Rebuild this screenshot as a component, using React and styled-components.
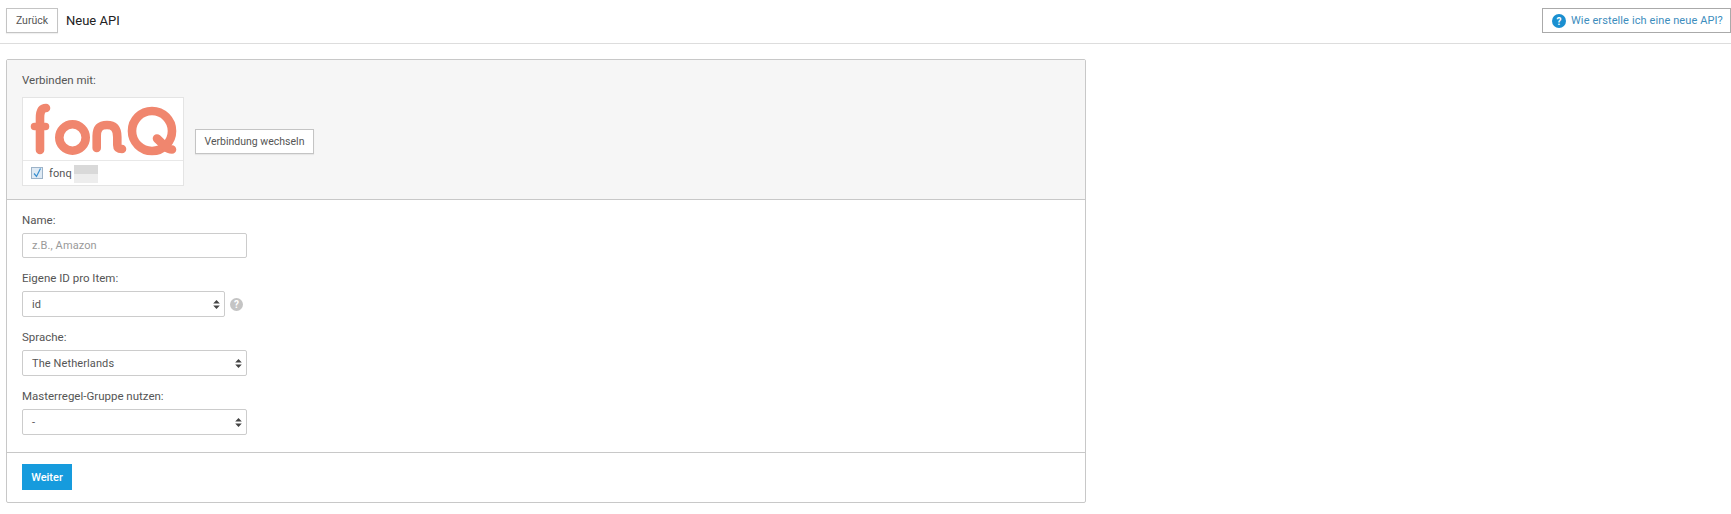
import React from "react";
import styled, { createGlobalStyle } from "styled-components";

const Global = createGlobalStyle`
  html, body { margin: 0; padding: 0; background: #fff; }
  body { font-family: Roboto, "Liberation Sans", sans-serif; font-size: 11px; color: #555; }
`;
const Header = styled.header`
  height: 44px; border-bottom: 1px solid #ddd; padding: 8px 0 0 6px; box-sizing: border-box;
  display: flex; align-items: flex-start; justify-content: space-between;
`;
const HeaderLeft = styled.div`display: flex; align-items: center; gap: 8px;`;
const Title = styled.h1`margin: 0; font-size: 13px; font-weight: 400; color: #222;`;
const Button = styled.button`
  height: 25px; width: ${p => p.$w}px; padding: 0; background: #fff; border: 1px solid #c4c4c4; color: #555;
  font: 400 10.5px Roboto, sans-serif; box-sizing: border-box; box-shadow: 0 1px 1px rgba(0,0,0,.06);
`;
const Help = styled.a`
  height: 25px; width: 189px; border: 1px solid #aaa; box-sizing: border-box; white-space: nowrap;
  display: flex; align-items: center; gap: 5px; padding-left: 9px; color: #3d8dbd; font-size: 11px; letter-spacing: .1px;
`;
const Panel = styled.main`
  width: 1080px; margin: 15px 0 0 6px; border: 1px solid #c8c8c8; border-radius: 2px; box-sizing: border-box;
`;
const Top = styled.section`
  height: 140px; background: #f6f6f6; border-bottom: 1px solid #c8c8c8; padding: 13px 15px 0; box-sizing: border-box;
`;
const Label = styled.label`display: block; font-size: 11.5px; color: #555; line-height: 14px;`;
const ConnectRow = styled.div`display: flex; align-items: center; gap: 11px; margin-top: 10px;`;
const Card = styled.div`width: 162px; height: 89px; background: #fff; border: 1px solid #e4e4e4; box-sizing: border-box;`;
const LogoBox = styled.div`height: 63px; border-bottom: 1px solid #e8e8e8; box-sizing: border-box;`;
const CardFoot = styled.div`display: flex; align-items: center; height: 24px; padding-left: 8px; gap: 6px; font-size: 11px; letter-spacing: .1px;`;
const Check = styled.span`
  width: 12px; height: 12px; border: 1px solid #9db3c8; background: #dfeaf4; display: block; box-sizing: border-box;
`;
const Blur = styled.span`display: block; width: 24px; height: 18px; margin: 2px 0 0 -4px; background: linear-gradient(#d9d9d9 0 50%, #ededed 50%);`;
const Form = styled.section`padding: 13px 15px 0; height: 253px; box-sizing: border-box; border-bottom: 1px solid #c8c8c8;`;
const Field = styled.div`margin-bottom: 13px;`;
const Control = styled.div`
  margin-top: 6px; height: ${p => p.$h}px; width: ${p => p.$w}px; border: 1px solid #ccc; border-radius: 2px; background: #fff;
  box-sizing: border-box; display: flex; align-items: center; justify-content: space-between; padding: 0 4px 0 9px;
  color: ${p => p.$muted ? "#999" : "#555"}; font-size: 11px; letter-spacing: .1px;
`;
const SelectRow = styled.div`display: flex; align-items: center; gap: 5px;`;
const Hint = styled.span`
  width: 13px; height: 13px; border-radius: 50%; background: #c4c4c4; color: #fff; font-size: 10px; font-weight: 700;
  display: flex; align-items: center; justify-content: center; margin-top: 6px;
`;
const Foot = styled.footer`padding: 11px 15px 0; height: 49px; box-sizing: border-box;`;
const Primary = styled.button`
  height: 26px; width: 50px; border: 0; background: #169bdd; color: #fff; font: 500 11px Roboto, sans-serif; padding: 0;
`;
const Logo = () => (
  <svg width="160" height="62" viewBox="0 0 160 62" style={{ display: "block" }} fill="none" stroke="#f0866e" strokeWidth="8.6" strokeLinecap="round">
    <path d="M17 52V20C17 13 19 10 23 10" />
    <path d="M11.5 28.5H22.5" strokeWidth="7.5" />
    <circle cx="49.5" cy="39.5" r="13.2" />
    <path d="M73.7 50V38C73.7 31 76 27 84 27C91 27 94.3 31 94.3 39V47C94.3 50 96 51 99 51" />
    <circle cx="129" cy="33" r="20" />
    <path d="M134 40.5L143 49C145 51 147 51.5 149 51.5" />
  </svg>
);
const Arrows = () => (
  <svg width="7" height="9" viewBox="0 0 7 9"><path d="M3.5 0L6.8 3.6H.2zM3.5 9L.2 5.4H6.8z" fill="#444" /></svg>
);
const Select = ({ w, children }) => <Control $h={26} $w={w}>{children}<Arrows /></Control>;

export default function App() {
  return (
    <>
      <Global />
      <Header>
        <HeaderLeft>
          <Button $w={52}>Zurück</Button>
          <Title>Neue API</Title>
        </HeaderLeft>
        <Help>
          <svg width="14" height="14" viewBox="0 0 14 14"><circle cx="7" cy="7" r="7" fill="#1a8fd0" /><text x="7" y="10.5" textAnchor="middle" fontSize="10" fontWeight="700" fontFamily="Roboto" fill="#fff">?</text></svg>
          Wie erstelle ich eine neue API?
        </Help>
      </Header>
      <Panel>
        <Top>
          <Label>Verbinden mit:</Label>
          <ConnectRow>
            <Card>
              <LogoBox><Logo /></LogoBox>
              <CardFoot>
                <Check>
                  <svg width="10" height="10" viewBox="0 0 10 10" fill="none" style={{ display: "block", overflow: "visible" }}><path d="M2 5.5L4.5 8.5L8.5 .5" stroke="#3a8fd0" strokeWidth="1.2" /></svg>
                </Check>
                <span>fonq</span>
                <Blur />
              </CardFoot>
            </Card>
            <Button $w={119}>Verbindung wechseln</Button>
          </ConnectRow>
        </Top>
        <Form>
          <Field><Label>Name:</Label><Control $h={25} $w={225} $muted>z.B., Amazon</Control></Field>
          <Field>
            <Label>Eigene ID pro Item:</Label>
            <SelectRow><Select w={203}>id</Select><Hint>?</Hint></SelectRow>
          </Field>
          <Field><Label>Sprache:</Label><Select w={225}>The Netherlands</Select></Field>
          <Field><Label>Masterregel-Gruppe nutzen:</Label><Select w={225}>-</Select></Field>
        </Form>
        <Foot><Primary>Weiter</Primary></Foot>
      </Panel>
    </>
  );
}
